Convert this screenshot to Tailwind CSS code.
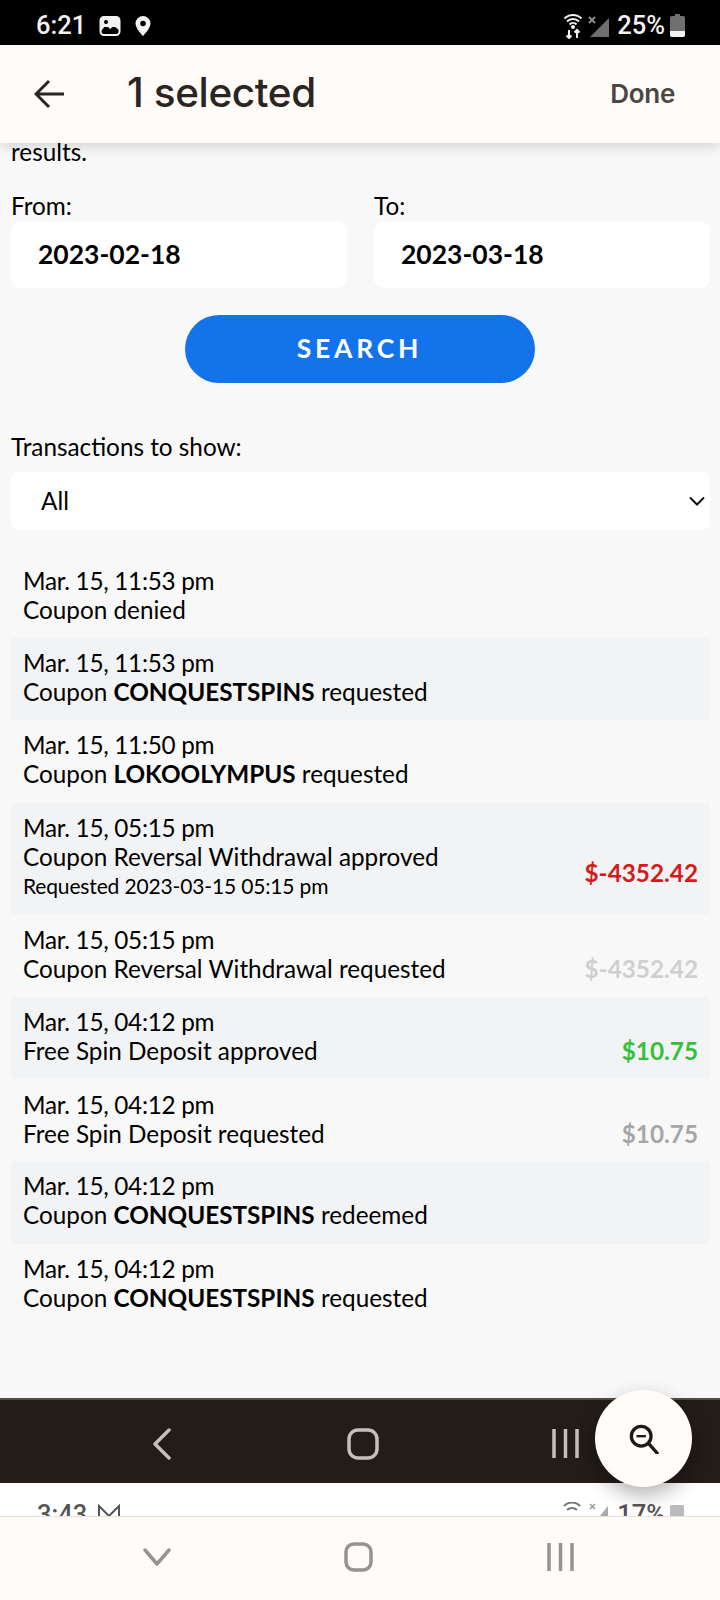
<!DOCTYPE html>
<html lang="en">
<head>
  <meta charset="UTF-8" />
  <meta name="viewport" content="width=device-width, initial-scale=1" />
  <title>Transactions</title>
  <script src="https://cdn.jsdelivr.net/npm/@tailwindcss/browser@4"></script>
</head>
<body class="w-[720px] h-[1600px] overflow-hidden flex flex-col bg-[#f8f8f8] font-['Lato',sans-serif] text-black">

  <!-- status bar -->
  <div class="h-[45px] shrink-0 bg-black text-[#f2f2f2] flex items-center justify-between pt-[6px] pl-[36px] pr-[35px] font-['Roboto',sans-serif] text-[25.500px] font-medium">
    <div class="flex items-center">
      <span>6:21</span>
      <svg class="ml-[13px]" width="22" height="22" viewBox="0 0 22 22"><rect x="1.500" y="2" width="19" height="18" rx="3.500" fill="none" stroke="#f2f2f2" stroke-width="2"/><rect x="2" y="3" width="18" height="9" fill="#f2f2f2"/><path d="M2 16l5-6 4 4 4-3 5 4v-9H2z" fill="#f2f2f2"/><circle cx="7" cy="7" r="2" fill="#000"/></svg>
      <svg class="ml-[13px]" width="18" height="22" viewBox="0 0 18 22"><path d="M9 1a7.500 7.500 0 0 0-7.500 7.500C1.500 13.500 9 21 9 21s7.500-7.500 7.500-12.500A7.500 7.500 0 0 0 9 1z" fill="#f2f2f2"/><circle cx="9" cy="8.500" r="2.800" fill="#000"/></svg>
    </div>
    <div class="flex items-center">
      <svg width="20" height="26" viewBox="0 0 20 26" fill="none" stroke="#f2f2f2" stroke-width="2"><path d="M1.500 5.500a12 12 0 0 1 17 0M4 8.500a8.500 8.500 0 0 1 12 0M6.500 11.500a5 5 0 0 1 7 0"/><circle cx="10" cy="14" r="1" fill="#f2f2f2"/><path d="M6 17v8M3.500 22.500L6 25l2.500-2.500M14 25v-8M11.500 19.500L14 17l2.500 2.500"/></svg>
      <svg class="ml-[5px]" width="22" height="24" viewBox="0 0 22 24"><path d="M21 4v19H2z" fill="#6f6f6f"/><path d="M1 3l6 6M7 3l-6 6" stroke="#8a8a8a" stroke-width="2"/></svg>
      <span class="ml-[7px]">25%</span>
      <svg class="ml-[5px]" width="15" height="23" viewBox="0 0 15 23"><path d="M5 0h5v2h3a2 2 0 0 1 2 2v17a2 2 0 0 1-2 2H2a2 2 0 0 1-2-2V4a2 2 0 0 1 2-2h3z" fill="#6f6f6f"/><path d="M0 17h15v4a2 2 0 0 1-2 2H2a2 2 0 0 1-2-2z" fill="#f2f2f2"/></svg>
    </div>
  </div>

  <!-- app bar -->
  <header class="relative z-10 h-[98px] shrink-0 bg-[#fffbf9] shadow-[0_4px_12px_rgba(0,0,0,0.14)] flex items-center justify-between pl-[34px] pr-[45px] text-[#2b2522] font-['Inter',sans-serif]">
    <div class="flex items-center">
      <svg width="30" height="30" viewBox="0 0 30 30" fill="none" stroke="#2b2522" stroke-width="3"><path d="M30 15H2M15 2L2 15l13 13"/></svg>
      <h1 class="ml-[63px] mb-[2px] text-[40.500px] font-medium tracking-[-0.400px] leading-none">1 selected</h1>
    </div>
    <span class="mb-[2px] text-[26px] font-semibold tracking-[-0.300px] text-[#4c4540]">Done</span>
  </header>

  <!-- page -->
  <main class="h-[1255px] shrink-0 overflow-hidden pl-[11px] pr-[10px]">
    <p class="text-[24.300px] leading-[30px] -mt-[6px]">results.</p>

    <div class="flex gap-[27px] mt-[24px]">
      <div class="flex-1">
        <div class="text-[24.300px] leading-[30px]">From:</div>
        <div class="h-[67px] bg-white rounded-[10px] flex items-center pl-[27px] text-[26.500px] font-bold">2023-02-18</div>
      </div>
      <div class="flex-1">
        <div class="text-[24.300px] leading-[30px]">To:</div>
        <div class="h-[67px] bg-white rounded-[10px] flex items-center pl-[27px] text-[26.500px] font-bold">2023-03-18</div>
      </div>
    </div>

    <div class="flex justify-center pr-[2px] mt-[27px]">
      <button class="w-[350px] h-[68px] rounded-full bg-[#1273eb] text-white text-[26.500px] font-bold tracking-[3.800px]">SEARCH</button>
    </div>

    <div class="text-[24.300px] leading-[30px] mt-[49px]">Transactions to show:</div>
    <div class="h-[58px] mt-[10px] bg-white rounded-[8px] flex items-center justify-between pl-[30px] pr-[5px] text-[24.300px]">
      <span>All</span>
      <svg width="16" height="10" viewBox="0 0 16 10" fill="none" stroke="#111" stroke-width="2"><path d="M1 1.500l7 7 7-7"/></svg>
    </div>

    <ul class="mt-[26px] text-[24.300px] leading-[29px]">
      <li class="px-[12px] py-[10px] h-[82px]">
        <div class="tracking-[-0.300px]">Mar. 15, 11:53 pm</div>
        <div>Coupon denied</div>
      </li>
      <li class="px-[12px] py-[10px] h-[82px] bg-[#f2f3f5] rounded-[4px]">
        <div class="tracking-[-0.300px]">Mar. 15, 11:53 pm</div>
        <div>Coupon <b>CONQUESTSPINS</b> requested</div>
      </li>
      <li class="px-[12px] py-[10px] h-[83px]">
        <div class="tracking-[-0.300px]">Mar. 15, 11:50 pm</div>
        <div>Coupon <b>LOKOOLYMPUS</b> requested</div>
      </li>
      <li class="px-[12px] py-[10px] h-[111px] bg-[#f2f3f5] rounded-[4px] flex items-start justify-between">
        <div>
          <div class="tracking-[-0.300px]">Mar. 15, 05:15 pm</div>
          <div>Coupon Reversal Withdrawal approved</div>
          <div class="text-[21px] tracking-[-0.150px]">Requested 2023-03-15 05:15 pm</div>
        </div>
        <b class="text-[#d61a1a] mt-[45px]">$-4352.42</b>
      </li>
      <li class="px-[12px] pt-[11px] h-[83px] flex items-start justify-between">
        <div>
          <div class="tracking-[-0.300px]">Mar. 15, 05:15 pm</div>
          <div>Coupon Reversal Withdrawal requested</div>
        </div>
        <b class="text-[#cfcfcf] mt-[29px]">$-4352.42</b>
      </li>
      <li class="px-[12px] py-[10px] h-[82px] bg-[#f2f3f5] rounded-[4px] flex items-start justify-between">
        <div>
          <div class="tracking-[-0.300px]">Mar. 15, 04:12 pm</div>
          <div>Free Spin Deposit approved</div>
        </div>
        <b class="text-[#35c03c] mt-[29px]">$10.75</b>
      </li>
      <li class="px-[12px] pt-[11px] h-[82px] flex items-start justify-between">
        <div>
          <div class="tracking-[-0.300px]">Mar. 15, 04:12 pm</div>
          <div>Free Spin Deposit requested</div>
        </div>
        <b class="text-[#a6a6a6] mt-[29px]">$10.75</b>
      </li>
      <li class="px-[12px] py-[10px] h-[83px] bg-[#f2f3f5] rounded-[4px]">
        <div class="tracking-[-0.300px]">Mar. 15, 04:12 pm</div>
        <div>Coupon <b>CONQUESTSPINS</b> redeemed</div>
      </li>
      <li class="px-[12px] py-[10px] h-[82px]">
        <div class="tracking-[-0.300px]">Mar. 15, 04:12 pm</div>
        <div>Coupon <b>CONQUESTSPINS</b> requested</div>
      </li>
    </ul>
  </main>

  <!-- nav bar of the captured screen -->
  <div class="relative h-[85px] shrink-0 bg-[#231c19] border-t-2 border-[#574c45]">
    <svg class="absolute left-[152px] top-[28px]" width="20" height="32" viewBox="0 0 20 32" fill="none" stroke="#c4c0bd" stroke-width="3.500" stroke-linecap="round" stroke-linejoin="round"><path d="M17 2L3 16l14 14"/></svg>
    <svg class="absolute left-[347px] top-[28px]" width="32" height="32" viewBox="0 0 32 32" fill="none" stroke="#c4c0bd" stroke-width="3.500"><rect x="2" y="2" width="28" height="28" rx="9"/></svg>
    <svg class="absolute left-[552px] top-[29px]" width="27" height="29" viewBox="0 0 27 29" stroke="#c4c0bd" stroke-width="3.500"><path d="M2 0v29M13.500 0v29M25 0v29"/></svg>
  </div>

  <!-- sliver of the next capture -->
  <div class="h-[33px] shrink-0 bg-white overflow-hidden flex justify-between pl-[37px] pr-[36px] pt-[19px] font-['Roboto',sans-serif] text-[25.500px] leading-none font-medium text-[#555]">
    <div class="flex gap-[10px]">
      <span>3:43</span>
      <svg class="mt-[2px]" width="24" height="20" viewBox="0 0 24 20" fill="none" stroke="#555" stroke-width="2"><path d="M2 19V2l10 10L22 2v17"/></svg>
    </div>
    <div class="flex items-start">
      <svg width="18" height="14" viewBox="0 0 18 14" fill="none" stroke="#777" stroke-width="2"><path d="M1 4a11 11 0 0 1 16 0M4 8a7 7 0 0 1 10 0"/></svg>
      <svg class="ml-[8px]" width="19" height="20" viewBox="0 0 19 20"><path d="M19 4v16H6z" fill="#aaa"/><path d="M1 2l5 5M6 2l-5 5" stroke="#999" stroke-width="1.500"/></svg>
      <span class="ml-[9px]">17%</span>
      <div class="ml-[5px] mt-[3px] w-[14px] h-[20px] rounded-[2px] bg-[#bbb]"></div>
    </div>
  </div>

  <!-- device nav bar -->
  <div class="h-[84px] shrink-0 bg-[#fffbf9] border-t border-[#f0dfdc] relative">
    <svg class="absolute left-[143px] top-[30px]" width="28" height="20" viewBox="0 0 28 20" fill="none" stroke="#979390" stroke-width="3.500" stroke-linecap="round" stroke-linejoin="round"><path d="M2 3l12 14L26 3"/></svg>
    <svg class="absolute left-[344px] top-[25px]" width="29" height="30" viewBox="0 0 29 30" fill="none" stroke="#979390" stroke-width="3.500"><rect x="2" y="2" width="25" height="26" rx="8"/></svg>
    <svg class="absolute left-[546px] top-[26px]" width="29" height="28" viewBox="0 0 29 28" stroke="#979390" stroke-width="3.500"><path d="M3 0v28M14.500 0v28M26 0v28"/></svg>
  </div>

  <!-- floating zoom button -->
  <button class="absolute left-[595px] top-[1390px] z-20 w-[97px] h-[97px] rounded-full bg-[#fffcfa] shadow-[0_8px_20px_rgba(0,0,0,0.3)] flex items-center justify-center">
    <svg width="30" height="30" viewBox="0 0 32 32" fill="none" stroke="#1c1a19" stroke-width="3.500"><circle cx="13" cy="13" r="10.500"/><path d="M21 21l9 10" stroke-linecap="round"/><path d="M8 13h10" stroke-width="2.500"/></svg>
  </button>
</body>
</html>
